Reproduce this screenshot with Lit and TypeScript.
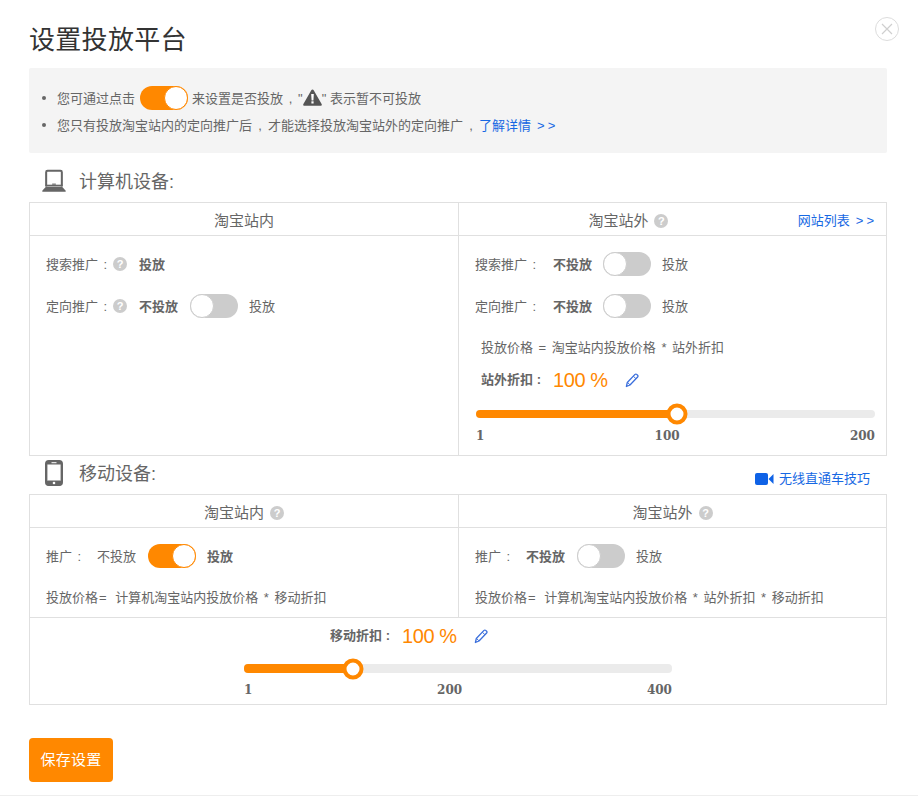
import { LitElement, html, css } from 'lit';
import { customElement } from 'lit/decorators.js';

const laptopIcon = html`<svg width="26" height="24" viewBox="0 0 26 24">
  <path d="M4.500 18V2.500c0-.8.500-1.500 1.500-1.500h14c1 0 1.500 .7 1.500 1.500V18" fill="none" stroke="#666" stroke-width="2.200"/>
  <rect x="4" y="16" width="18" height="2" fill="#666"/>
  <rect x="11" y="14.800" width="4" height="1.200" fill="#666"/>
  <path d="M4 18.500h18l3.500 3.800c.5.700.2 1.400-.6 1.400H1.100c-.8 0-1.100-.7-.6-1.400z" fill="#666"/>
</svg>`;

const phoneIcon = html`<svg width="18" height="26" viewBox="0 0 18 26">
  <rect x="1.200" y="1.200" width="15.600" height="23.600" rx="2.600" fill="none" stroke="#666" stroke-width="2.400"/>
  <rect x="1" y="1" width="16" height="3.500" rx="1.500" fill="#666"/>
  <rect x="1" y="20.500" width="16" height="5" rx="2" fill="#666"/>
  <rect x="6.500" y="2.200" width="5" height="1" fill="#fff"/>
  <circle cx="9" cy="23" r="1.300" fill="#fff"/>
</svg>`;

const warnIcon = html`<svg class="warn" width="19" height="17" viewBox="0 0 19 17">
  <path d="M9.500 .5c.5 0 .9.3 1.200.8l7.900 13.700c.5.900 0 1.800-1 1.800H1.400c-1 0-1.500-.9-1-1.800L8.300 1.300c.3-.5.700-.8 1.200-.8z" fill="#555"/>
  <path d="M8.200 5h2.600l-.4 6.400H8.600z" fill="#fff"/>
  <rect x="8.400" y="12.300" width="2.200" height="2.200" fill="#fff"/>
</svg>`;

const pencilIcon = html`<svg class="pencil" width="14" height="15" viewBox="0 0 14 15">
  <path d="M10 1.400c.5-.5 1.200-.5 1.700 0l.9.9c.5.500.5 1.200 0 1.700L5 12l-3.600 1.500L2.300 9.500z" fill="none" stroke="#3b6fdc" stroke-width="1.300" stroke-linejoin="round"/>
  <path d="M8.400 3.200l2.600 2.600M2.600 9.400l2.200 2.400" fill="none" stroke="#3b6fdc" stroke-width="1"/>
</svg>`;

const videoIcon = html`<svg width="19" height="12" viewBox="0 0 19 12">
  <rect x="0" y="0" width="13" height="12" rx="2" fill="#0f62e6"/>
  <path d="M13.500 6L18.500 1v10z" fill="#0f62e6"/>
</svg>`;

const closeIcon = html`<svg width="24" height="24" viewBox="0 0 24 24">
  <circle cx="12" cy="12" r="11.500" fill="#fff" stroke="#dcdcdc"/>
  <path d="M7 7l10 10M17 7L7 17" stroke="#cfcfcf" stroke-width="1.200"/>
</svg>`;

@customElement('app-root')
export class AppRoot extends LitElement {

  static styles = css`
    :host {
      display: block;
      font-family: "Liberation Sans", "Noto Sans CJK SC", sans-serif;
      font-size: 13px;
      line-height: 20px;
      word-spacing: 2px;
      color: #666;
    }

    .page {
      position: relative;
      width: 918px;
      box-sizing: border-box;
      padding: 24px 31px 13px 29px;
      border-bottom: 1px solid #eee;
      background: #fff;
    }

    .close {
      position: absolute;
      top: 17px;
      left: 875px;
      width: 24px;
      height: 24px;
    }

    h1 {
      margin: 0 0 12px;
      font-size: 26px;
      line-height: 32px;
      font-weight: normal;
      letter-spacing: .3px;
      color: #333;
    }

    .notice {
      height: 85px;
      box-sizing: border-box;
      padding: 16px 0 0 13px;
      background: #f4f4f4;
      border-radius: 2px;
    }

    .tip {
      display: flex;
      align-items: center;
      height: 27px;
      white-space: pre;
    }

    .tip::before {
      content: "";
      width: 4px;
      height: 4px;
      margin-right: 11px;
      border-radius: 50%;
      background: #666;
    }

    .tip > span {
      padding-top: 3px;
    }

    .tip .toggle {
      margin: 0 4px 0 5px;
    }

    .after-warn {
      word-spacing: 0;
    }

    .comma {
      display: inline-block;
      width: 16px;
      text-align: center;
    }

    .comma.short {
      width: 15px;
    }

    a {
      color: #1668e3;
      text-decoration: none;
    }

    .arrows {
      letter-spacing: 3px;
      margin-left: 6px;
    }

    .section {
      display: flex;
      align-items: center;
      box-sizing: border-box;
      padding-left: 13px;
      font-size: 18px;
      line-height: 22px;
    }

    .section.pc {
      height: 49px;
      padding-top: 6px;
    }

    .section.pc .section-title {
      padding-top: 3px;
    }

    .section.mobile {
      height: 38px;
      padding-bottom: 4px;
    }

    .section.mobile .section-title {
      padding-top: 2px;
    }

    .section-icon {
      display: flex;
      justify-content: center;
      width: 24px;
      margin-right: 13px;
    }

    .section .video-link {
      display: flex;
      align-items: center;
      gap: 5px;
      margin: 12px 17px 0 auto;
      font-size: 13px;
    }

    .table {
      border: 1px solid #e0e0e0;
    }

    .columns {
      display: grid;
      grid-template-columns: 428px 1fr;
    }

    .col + .col {
      border-left: 1px solid #e0e0e0;
    }

    .head {
      display: flex;
      align-items: center;
      height: 33px;
      box-sizing: border-box;
      padding-top: 4px;
      border-bottom: 1px solid #e0e0e0;
      font-size: 15px;
    }

    .head-title {
      flex: 1;
      display: flex;
      justify-content: center;
      align-items: center;
      gap: 6px;
    }

    .head a {
      font-size: 13px;
      padding: 0 9px 0 0;
    }

    .help {
      display: inline-block;
      width: 14px;
      height: 14px;
      border-radius: 50%;
      background: #ccc;
      color: #fff;
      font-size: 11px;
      font-weight: bold;
      line-height: 14px;
      text-align: center;
    }

    .body {
      padding: 16px 11px 0 16px;
    }

    .pc-body {
      height: 219px;
      box-sizing: border-box;
    }

    .row {
      display: flex;
      align-items: center;
      height: 24px;
      margin-bottom: 18px;
    }

    .row > b,
    .row > .text,
    .label {
      padding-top: 2px;
    }

    .label {
      display: flex;
      align-items: center;
      flex: none;
      gap: 6px;
      white-space: pre;
    }

    .label .help {
      margin-top: -2px;
    }

    .label.wide { width: 93px; }
    .label.mid { width: 78px; }
    .label.short { width: 51px; }

    b {
      font-weight: bold;
    }

    .row .toggle {
      margin: 0 11px 0 12px;
    }

    .row.tight .toggle {
      margin-left: 11px;
    }

    .toggle {
      flex: none;
      display: inline-block;
      position: relative;
      width: 48px;
      height: 24px;
      box-sizing: border-box;
      border-radius: 12px;
      background: #ccc;
    }

    .toggle::after {
      content: "";
      position: absolute;
      left: 0;
      top: 0;
      width: 22px;
      height: 22px;
      border: 1px solid #ccc;
      border-radius: 50%;
      background: #fff;
    }

    .toggle.on {
      background: #ff8800;
    }

    .toggle.on::after {
      left: auto;
      right: 0;
      border-color: #ff8800;
    }

    .formula {
      padding: 2px 0 0 6px;
    }

    .eq {
      padding: 0 3px 0 1px;
    }

    .discount {
      display: flex;
      align-items: center;
      height: 20px;
    }

    .discount b {
      width: 72px;
      flex: none;
      word-spacing: 0;
    }

    .discount .value {
      width: 55px;
      flex: none;
      font-size: 20px;
      letter-spacing: -.4px;
      word-spacing: 0;
      white-space: nowrap;
      color: #ff8800;
    }

    .pencil {
      margin-left: 17px;
    }

    .pc-discount {
      margin: 12px 0 0 6px;
    }

    .pc-slider {
      margin: 20px 0 0 1px;
    }

    .slider .track {
      position: relative;
      height: 8px;
      border-radius: 4px;
      background: #ebebeb;
    }

    .slider .fill {
      height: 100%;
      border-radius: 4px;
      background: #ff8800;
    }

    .slider .thumb {
      position: absolute;
      top: 50%;
      width: 21px;
      height: 21px;
      box-sizing: border-box;
      transform: translate(-50%, -50%);
      border: 4px solid #ff8800;
      border-radius: 50%;
      background: #fff;
    }

    .scale {
      display: flex;
      justify-content: space-between;
      margin-top: 8px;
      font-family: "DejaVu Serif", serif;
      font-size: 12px;
      font-weight: bold;
    }

    .mobile-body {
      height: 89px;
      box-sizing: border-box;
    }

    .mobile-body .formula {
      padding: 2px 0 0;
    }

    .mobile-discount-row {
      height: 87px;
      box-sizing: border-box;
      padding-top: 8px;
      border-top: 1px solid #e0e0e0;
    }

    .mobile-discount {
      margin-left: 300px;
    }

    .mobile-slider {
      width: 428px;
      margin: 18px 0 0 214px;
    }

    .mobile-slider .track {
      height: 9px;
    }

    .mobile-slider .scale {
      margin-top: 7px;
    }

    .save {
      display: block;
      width: 84px;
      height: 44px;
      margin-top: 33px;
      padding: 0;
      border: 0;
      border-radius: 4px;
      background: #ff8800;
      color: #fff;
      font: inherit;
      font-size: 15px;
      letter-spacing: .3px;
    }
  `;

  private toggle(on: boolean) {
    return html`<span class="toggle ${on ? 'on' : ''}"></span>`;
  }

  private help() {
    return html`<span class="help">?</span>`;
  }

  private choice(on: boolean) {
    return html`
      ${on ? html`<span class="text">不投放</span>` : html`<b>不投放</b>`}
      ${this.toggle(on)}
      ${on ? html`<b>投放</b>` : html`<span class="text">投放</span>`}
    `;
  }

  private discount(label: string, cls: string) {
    return html`
      <div class="discount ${cls}">
        <b>${label} :</b>
        <span class="value">100 %</span>
        ${pencilIcon}
      </div>
    `;
  }

  private slider(cls: string, percent: number, marks: string[]) {
    return html`
      <div class="slider ${cls}">
        <div class="track">
          <div class="fill" style="width: ${percent}%"></div>
          <div class="thumb" style="left: ${percent}%"></div>
        </div>
        <div class="scale">${marks.map((m) => html`<span>${m}</span>`)}</div>
      </div>
    `;
  }

  render() {
    return html`
      <div class="page">
        <div class="close">${closeIcon}</div>
        <h1>设置投放平台</h1>

        <div class="notice">
          <div class="tip"><span>您可通过点击</span>${this.toggle(true)}<span>来设置是否投放<span class="comma short">,</span>"</span>${warnIcon}<span class="after-warn">" 表示暂不可投放</span></div>
          <div class="tip"><span>您只有投放淘宝站内的定向推广后<span class="comma">,</span>才能选择投放淘宝站外的定向推广<span class="comma">,</span><a href="#">了解详情<span class="arrows">&gt;&gt;</span></a></span></div>
        </div>

        <div class="section pc">
          <span class="section-icon">${laptopIcon}</span>
          <span class="section-title">计算机设备:</span>
        </div>

        <div class="table">
          <div class="columns">
            <div class="col">
              <div class="head"><span class="head-title">淘宝站内</span></div>
              <div class="body pc-body">
                <div class="row">
                  <span class="label wide">搜索推广 :${this.help()}</span>
                  <b>投放</b>
                </div>
                <div class="row">
                  <span class="label wide">定向推广 :${this.help()}</span>
                  ${this.choice(false)}
                </div>
              </div>
            </div>
            <div class="col">
              <div class="head">
                <span class="head-title">淘宝站外${this.help()}</span>
                <a href="#">网站列表<span class="arrows">&gt;&gt;</span></a>
              </div>
              <div class="body pc-body">
                <div class="row tight">
                  <span class="label mid">搜索推广 :</span>
                  ${this.choice(false)}
                </div>
                <div class="row tight">
                  <span class="label mid">定向推广 :</span>
                  ${this.choice(false)}
                </div>
                <div class="formula">投放价格 = 淘宝站内投放价格 * 站外折扣</div>
                ${this.discount('站外折扣', 'pc-discount')}
                ${this.slider('pc-slider', 50.4, ['1', '100', '200'])}
              </div>
            </div>
          </div>
        </div>

        <div class="section mobile">
          <span class="section-icon">${phoneIcon}</span>
          <span class="section-title">移动设备:</span>
          <a class="video-link" href="#">${videoIcon}无线直通车技巧</a>
        </div>

        <div class="table">
          <div class="columns">
            <div class="col">
              <div class="head"><span class="head-title">淘宝站内${this.help()}</span></div>
              <div class="body mobile-body">
                <div class="row">
                  <span class="label short">推广 :</span>
                  ${this.choice(true)}
                </div>
                <div class="formula">投放价格<span class="eq">=</span> 计算机淘宝站内投放价格 * 移动折扣</div>
              </div>
            </div>
            <div class="col">
              <div class="head"><span class="head-title">淘宝站外${this.help()}</span></div>
              <div class="body mobile-body">
                <div class="row">
                  <span class="label short">推广 :</span>
                  ${this.choice(false)}
                </div>
                <div class="formula">投放价格<span class="eq">=</span> 计算机淘宝站内投放价格 * 站外折扣 * 移动折扣</div>
              </div>
            </div>
          </div>
          <div class="mobile-discount-row">
            ${this.discount('移动折扣', 'mobile-discount')}
            ${this.slider('mobile-slider', 25.5, ['1', '200', '400'])}
          </div>
        </div>

        <button class="save">保存设置</button>
      </div>
    `;
  }

}
